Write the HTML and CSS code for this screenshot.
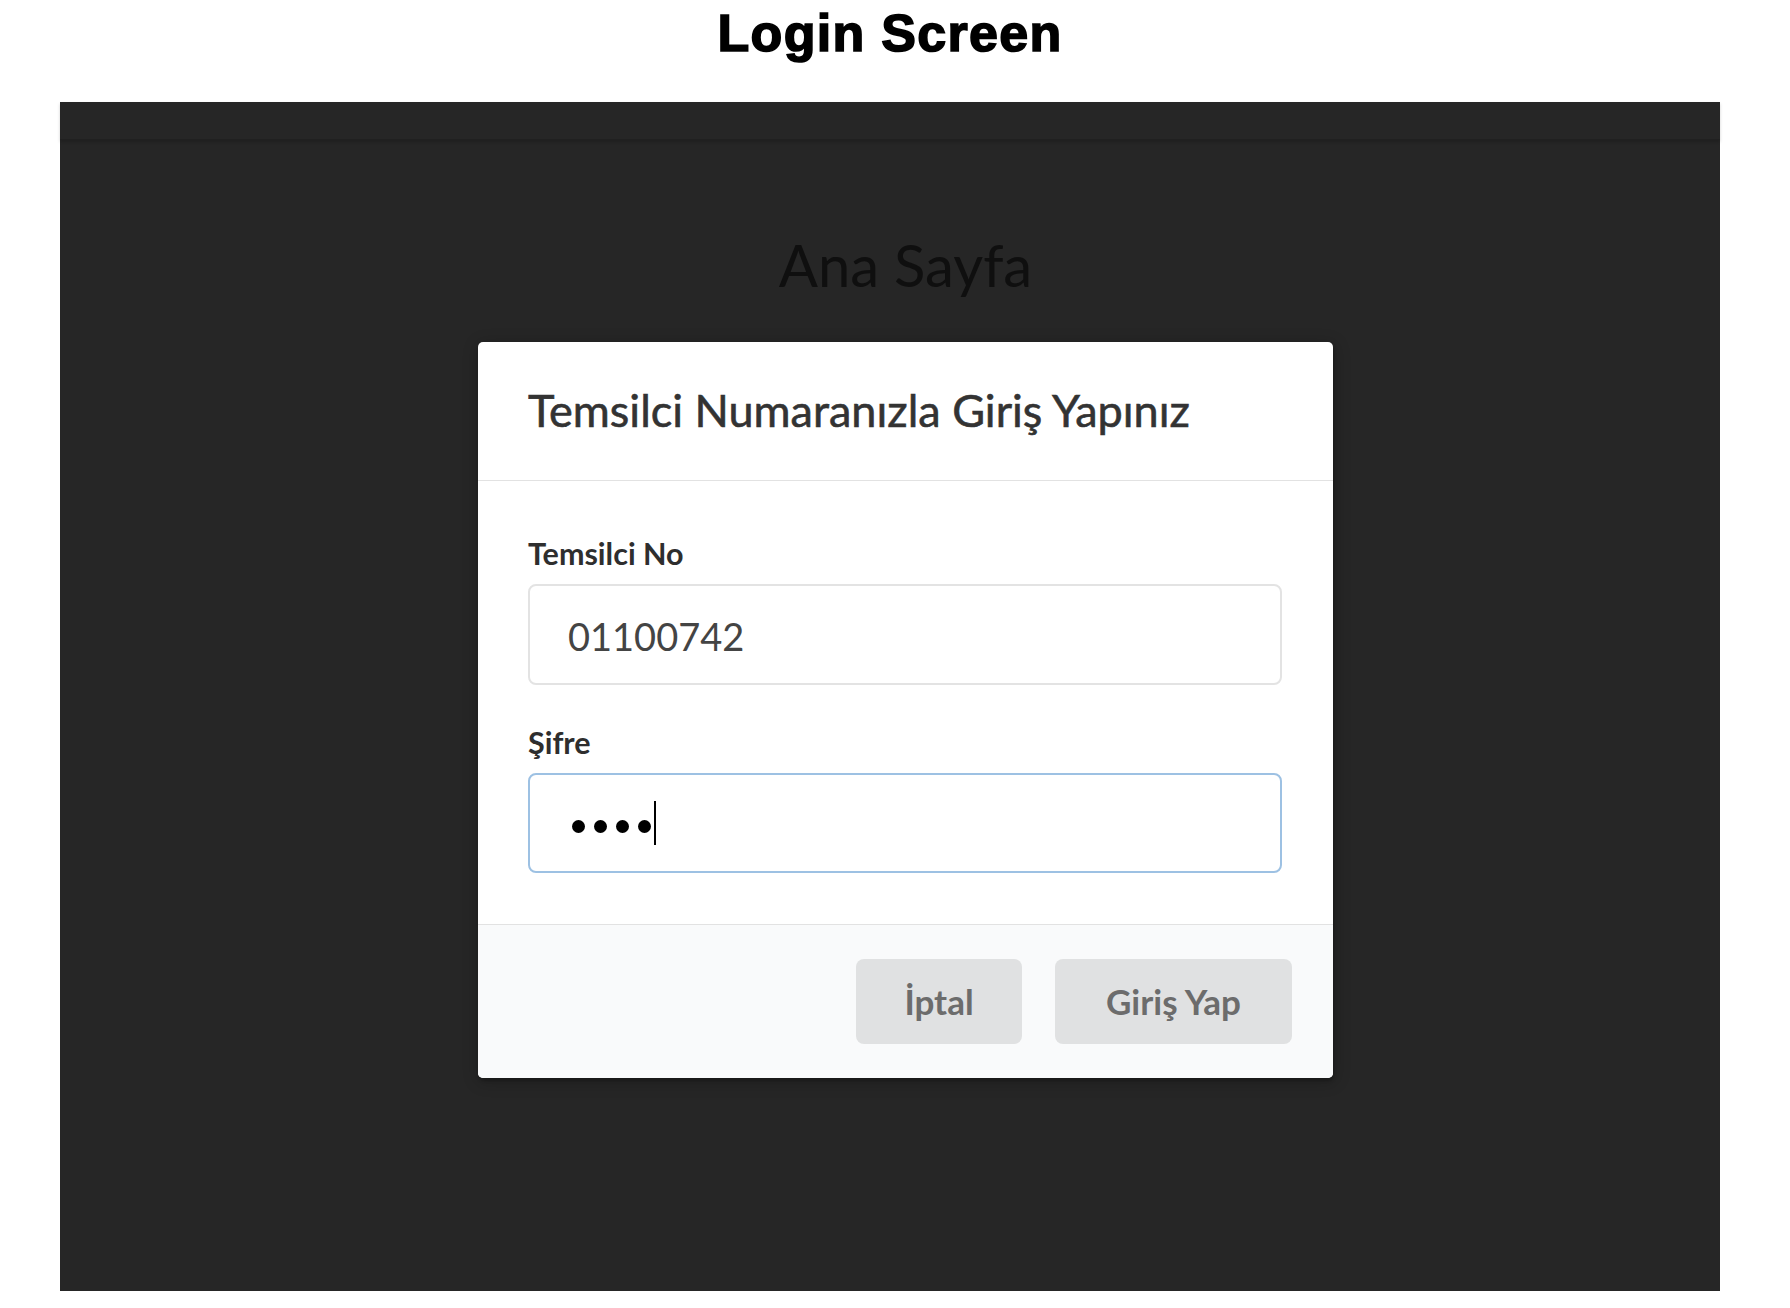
FILE: index.html
```html
<!DOCTYPE html>
<html lang="tr">
<head>
<meta charset="utf-8">
<title>Login Screen</title>
<link rel="stylesheet" href="styles.css">
</head>
<body>
<div class="wrap">
  <h1 class="page-title">Login Screen</h1>
  <div class="screen">
    <div class="navbar"></div>
    <div class="stage">
      <h2 class="home-title">Ana Sayfa</h2>
      <div class="modal">
        <div class="modal-header">Temsilci Numaranızla Giriş Yapınız</div>
        <div class="modal-content">
          <div class="field">
            <div class="label">Temsilci No</div>
            <div class="input first"><span class="value">01100742</span></div>
          </div>
          <div class="field">
            <div class="label">Şifre</div>
            <div class="input focused">
              <span class="dot"></span><span class="dot"></span><span class="dot"></span><span class="dot"></span><span class="caret"></span>
            </div>
          </div>
        </div>
        <div class="modal-actions">
          <div class="btn btn-cancel">İptal</div>
          <div class="btn btn-login">Giriş Yap</div>
        </div>
      </div>
    </div>
  </div>
</div>
</body>
</html>
```

FILE: styles.css
```css
html, body {
  margin: 0;
  padding: 0;
  background: #ffffff;
}

.wrap {
  margin-left: 60px;
  width: 1660px;
}

.page-title {
  margin: 0 0 38px 0;
  padding-top: 2px;
  font-family: "Liberation Sans", Arial, sans-serif;
  font-weight: 700;
  font-size: 52px;
  line-height: 62px;
  letter-spacing: 1.3px;
  -webkit-text-stroke: 1.6px #000;
  text-align: center;
  color: #000;
}

.screen {
  height: 1189px;
  background: #262626;
  display: flex;
  flex-direction: column;
}

.navbar {
  height: 37px;
  border-bottom: 1px solid #202020;
  box-shadow: 0 2px 3px rgba(0, 0, 0, 0.18);
}

.stage {
  display: flex;
  flex-direction: column;
  align-items: center;
  padding-left: 31px;
}

.home-title {
  margin: 90px 0 42px 0;
  font-family: "Lato", sans-serif;
  font-weight: 400;
  font-size: 58px;
  line-height: 70px;
  color: #0f0f0f;
}

.modal {
  width: 855px;
  background: #ffffff;
  border-radius: 5px;
  box-shadow: 1px 3px 3px 0 rgba(0, 0, 0, 0.2), 1px 3px 15px 2px rgba(0, 0, 0, 0.2);
  font-family: "Lato", sans-serif;
  overflow: hidden;
}

.modal-header {
  padding: 41px 50px 43px 50px;
  border-bottom: 1px solid #e2e2e2;
  font-size: 45px;
  line-height: 54px;
  font-weight: 400;
  -webkit-text-stroke: 0.6px #333;
  color: #333;
}

.modal-content {
  padding: 54px 51px 51px 50px;
  display: flex;
  flex-direction: column;
  gap: 39px;
}

.label {
  font-size: 30.5px;
  line-height: 36px;
  font-weight: 700;
  color: #2e2e2e;
  margin-bottom: 13px;
}

.input {
  box-sizing: border-box;
  height: 100px;
  border: 2px solid #e3e3e3;
  border-radius: 8px;
  padding: 0 38px;
  display: flex;
  align-items: center;
}

.input.first {
  height: 101px;
}

.input.focused {
  border-color: #9dc1e3;
}

.value {
  padding-top: 3px;
  font-size: 38px;
  line-height: 46px;
  color: #444;
}

.dot {
  width: 13px;
  height: 13px;
  border-radius: 50%;
  background: #000;
  margin: 6px 9px 0 0;
}

.dot:first-child {
  margin-left: 4px;
}

.dot:nth-child(4) {
  margin-right: 3px;
}

.caret {
  width: 2px;
  height: 44px;
  background: #000;
}

.modal-actions {
  border-top: 1px solid #e2e2e2;
  background: #f9fafb;
  padding: 34px 41px 34px 0;
  display: flex;
  justify-content: flex-end;
  gap: 33px;
}

.btn {
  height: 85px;
  line-height: 84px;
  border-radius: 8px;
  background: #e0e1e2;
  color: #6c6c6c;
  font-size: 35px;
  font-weight: 700;
  text-align: center;
}

.btn-cancel {
  width: 166px;
}

.btn-login {
  width: 237px;
}
```
